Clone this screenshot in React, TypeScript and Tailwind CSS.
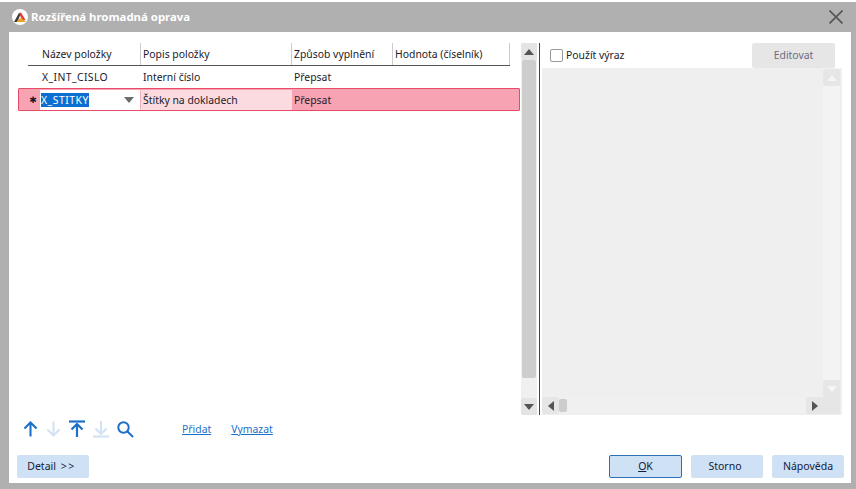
import React from 'react';

const Tri: React.FC<{ dir: 'up' | 'down' | 'left' | 'right'; color: string }> = ({ dir, color }) => {
  const pts = {
    up: '0,7 10,7 5,1',
    down: '0,1 10,1 5,7',
    left: '7,0 7,10 1,5',
    right: '1,0 1,10 7,5',
  }[dir];
  const box = dir === 'up' || dir === 'down' ? '0 0 10 8' : '0 0 8 10';
  return (
    <svg viewBox={box} className={dir === 'up' || dir === 'down' ? 'w-[10px] h-[8px]' : 'w-[8px] h-[10px]'}>
      <polygon points={pts} fill={color} />
    </svg>
  );
};

const ArrowIcon: React.FC<{ down?: boolean; bar?: boolean; color: string; w: number }> = ({ down, bar, color, w }) => (
  <svg viewBox="0 0 16 18" style={{ width: w }} className="h-[18px]" fill="none" stroke={color} strokeWidth={2.2}>
    <g transform={down ? 'rotate(180 8 9)' : undefined}>
      {bar && <path d="M0 1.5 H16" />}
      <path d={bar ? 'M8 17 V4 M2.5 9.5 L8 4 L13.5 9.5' : 'M8 17 V2 M1.5 8.5 L8 2 L14.5 8.5'} />
    </g>
  </svg>
);

const Btn: React.FC<{ w: string; ok?: boolean; children: React.ReactNode }> = ({ w, ok, children }) => (
  <div
    className={`${w} h-[23px] flex items-center justify-center rounded-[2px] bg-[#cfe1f4] text-[#14203a] text-[10.5px] ${
      ok ? 'border border-[#2a70b8]' : ''
    }`}
  >
    {children}
  </div>
);

const cellPad = 'pl-[2px] flex items-center';

export default function App() {
  return (
    <div className="w-[856px] h-[489px] bg-white pt-[2px] overflow-hidden font-['Noto_Sans',sans-serif] text-[10.4px] text-[#1a1a2a] leading-none">
      <div className="h-[487px] bg-[#b0b0b0] pl-[9px] pr-[5px] pb-[6px] flex flex-col">
        {/* Title bar */}
        <div className="h-[30px] flex items-center justify-between pl-[3px] pr-[8px] shrink-0">
          <div className="flex items-center gap-[3px]">
            <div className="w-[16px] h-[16px] rounded-full bg-white flex items-center justify-center">
              <svg viewBox="0 0 12 10" className="w-[12px] h-[10px]">
                <path d="M0 10 L5 1 L7 1 L5 6 L3 10 Z" fill="#3a3a3a" />
                <path d="M5 1 L7 0.5 L11.5 8 L8 8 Z" fill="#e2402f" />
                <path d="M3 10 L5 6.5 L8 6.5 L12 10 Z" fill="#f0a020" />
              </svg>
            </div>
            <span className="text-white font-bold text-[11.4px]">Rozšířená hromadná oprava</span>
          </div>
          <svg viewBox="0 0 14 14" className="w-[14px] h-[14px]" stroke="#555" strokeWidth={1.6}>
            <path d="M0.5 0.5 L13.5 13.5 M13.5 0.5 L0.5 13.5" />
          </svg>
        </div>

        {/* Body */}
        <div className="flex-1 bg-white flex flex-col pl-[9px] pt-[11px]">
          <div className="flex h-[372px]">
            {/* Table */}
            <div className="w-[503px] shrink-0">
              <div className="flex h-[23px] ml-[10px] w-[482px] border-b border-[#555]">
                <div className="w-[113px] pl-[14px] flex items-center border-r border-[#ccc]">Název položky</div>
                <div className={`w-[151px] border-r border-[#ccc] ${cellPad}`}>Popis položky</div>
                <div className={`w-[101px] border-r border-[#ccc] ${cellPad}`}>Způsob vyplnění</div>
                <div className={`w-[117px] border-r border-[#ccc] ${cellPad}`}>Hodnota (číselník)</div>
              </div>
              <div className="flex h-[22px] ml-[10px]">
                <div className="w-[113px] pl-[14px] flex items-center tracking-[0.4px]">X_INT_CISLO</div>
                <div className={`w-[151px] ${cellPad}`}>Interní číslo</div>
                <div className={`w-[101px] ${cellPad}`}>Přepsat</div>
              </div>
              <div className="flex h-[23px] w-[502px] pt-[1px] border border-[#e84a6a] rounded-[1px] bg-[#f8a3b3]">
                <div className="w-[21px] flex items-center justify-center pl-[7px] font-['DejaVu_Sans',sans-serif] text-[9px]">
                  ✱
                </div>
                <div className="w-[100px] bg-white flex items-center justify-between pl-[1px] pr-[6px]">
                  <span className="bg-[#0a6fd0] text-white h-[14px] flex items-center tracking-[0.5px]">X_STITKY</span>
                  <Tri dir="down" color="#6b6b6b" />
                </div>
                <div className={`w-[152px] bg-[#fcdbe0] ${cellPad} border-l border-[#f0b0bc]`}>Štítky na dokladech</div>
                <div className={`flex-1 ${cellPad}`}>Přepsat</div>
              </div>
            </div>

            {/* Vertical scrollbar */}
            <div className="w-[16px] shrink-0 bg-[#f0f0f0] flex flex-col">
              <div className="h-[17px] bg-[#e4e4e4] rounded-[2px] flex items-center justify-center">
                <Tri dir="up" color="#555" />
              </div>
              <div className="flex-1 bg-[#cdcdcd] rounded-[2px] mx-[1px]" />
              <div className="h-[17px] mt-[20px] bg-[#e4e4e4] rounded-[2px] flex items-center justify-center">
                <Tri dir="down" color="#555" />
              </div>
            </div>

            {/* Divider */}
            <div className="w-[1px] bg-[#444] ml-[2px] shrink-0" />

            {/* Right panel */}
            <div className="w-[300px] ml-[2px] flex flex-col shrink-0">
              <div className="h-[25px] flex justify-between items-start pl-[8px] pr-[7px]">
                <div className="flex items-center gap-[3px] h-[24px]">
                  <div className="w-[13px] h-[13px] border border-[#999] rounded-[2px] bg-white" />
                  <span>Použít výraz</span>
                </div>
                <div className="w-[83px] h-[25px] bg-[#e6e6e6] rounded-[2px] flex items-center justify-center text-[#6a6a80]">
                  Editovat
                </div>
              </div>
              <div className="flex-1 bg-[#efefef] flex">
                <div className="flex-1 flex flex-col pb-[1px]">
                  <div className="flex-1" />
                  <div className="h-[17px] bg-[#f0f0f0] flex items-center justify-between">
                    <div className="flex items-center">
                      <div className="w-[17px] h-[17px] bg-[#e6e6e6] rounded-[2px] flex items-center justify-center">
                        <Tri dir="left" color="#555" />
                      </div>
                      <div className="w-[8px] h-[13px] bg-[#cdcdcd] rounded-[2px]" />
                    </div>
                    <div className="w-[17px] h-[17px] bg-[#e6e6e6] rounded-[2px] flex items-center justify-center">
                      <Tri dir="right" color="#555" />
                    </div>
                  </div>
                </div>
                <div className="w-[17px] flex flex-col mr-[2px] mb-[1px] bg-[#f3f3f3]">
                  <div className="h-[17px] mt-[1px] bg-[#e6e6e6] rounded-[2px] flex items-center justify-center">
                    <Tri dir="up" color="#f5f5f5" />
                  </div>
                  <div className="flex-1" />
                  <div className="h-[17px] bg-[#e6e6e6] rounded-[2px] flex items-center justify-center">
                    <Tri dir="down" color="#f5f5f5" />
                  </div>
                  <div className="h-[17px] bg-[#e6e6e6]" />
                </div>
              </div>
            </div>
          </div>

          {/* Toolbar */}
          <div className="flex items-center h-[18px] mt-[5px] pl-[5px]">
            <div className="flex items-center gap-[8px]">
              <ArrowIcon color="#1c70c8" w={15} />
              <ArrowIcon color="#d3e3f3" down w={15} />
              <ArrowIcon color="#1c70c8" bar w={16} />
              <ArrowIcon color="#d3e3f3" bar down w={16} />
            </div>
            <svg viewBox="0 0 17 17" className="w-[17px] h-[17px] ml-[8px]" fill="none" stroke="#1c70c8" strokeWidth={2}>
              <circle cx="6.5" cy="6.5" r="5.2" />
              <path d="M10.5 10.5 L16 16" />
            </svg>
            <a className="ml-[48px] underline text-[#1c70c8]">Přidat</a>
            <a className="ml-[20px] underline text-[#1c70c8]">Vymazat</a>
          </div>

          {/* Buttons */}
          <div className="flex mt-[17px] pr-[7px] -ml-[1px]">
            <Btn w="w-[72px]">
              <span className="pr-[3px]">
                Detail <span className="tracking-[1.5px] ml-[2px]">&gt;&gt;</span>
              </span>
            </Btn>
            <div className="ml-auto flex gap-[9px]">
              <Btn w="w-[73px]" ok>
                <span className="underline">O</span>K
              </Btn>
              <Btn w="w-[72px]">
                <span className="pr-[4px]">Storno</span>
              </Btn>
              <Btn w="w-[72px]">Nápověda</Btn>
            </div>
          </div>
        </div>
      </div>
    </div>
  );
}
